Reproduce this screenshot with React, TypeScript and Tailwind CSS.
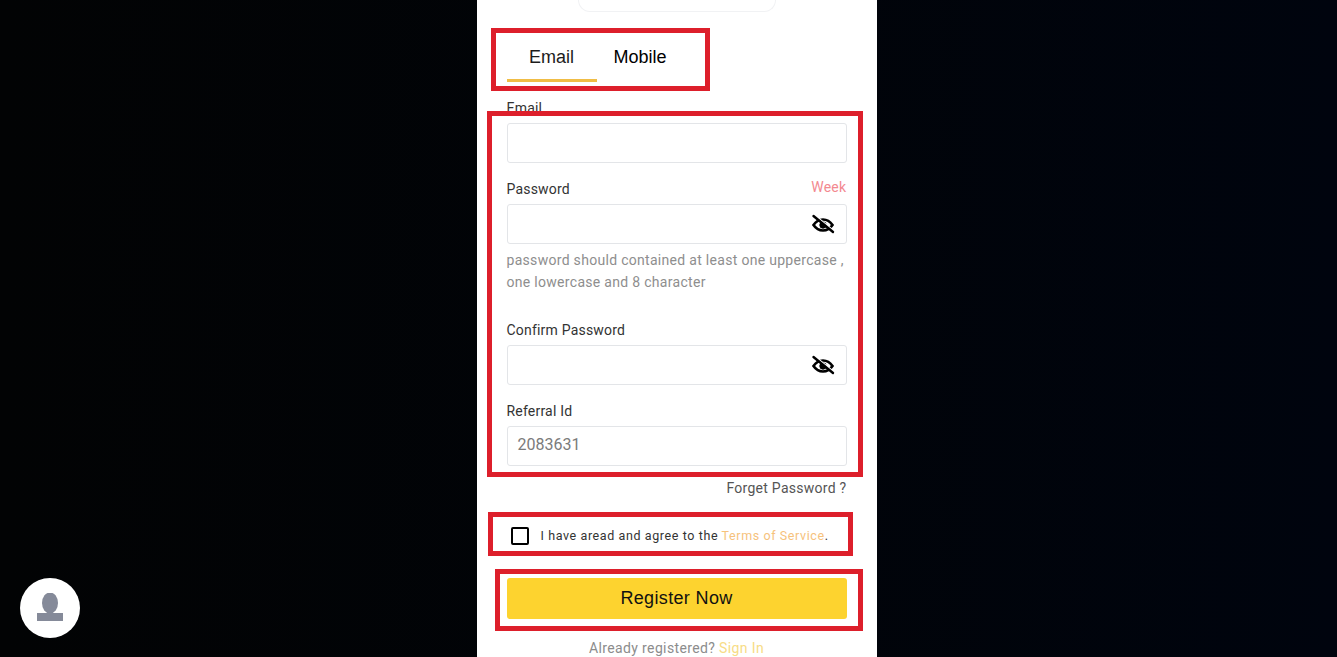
function EyeOff() {
  return (
    <svg viewBox="0 0 24 24" className="w-6 h-6 text-black" fill="none" stroke="currentColor">
      <path d="M2.500 13C5 9.300 8 7.500 12 7.500s7 1.800 9.500 5.500c-2.500 3.700-5.500 5.500-9.500 5.500s-7-1.800-9.500-5.500z" strokeWidth="2.600" />
      <circle cx="12" cy="13" r="3.200" fill="currentColor" strokeWidth="1" />
      <path d="M3 2.500l19 15.500" stroke="white" strokeWidth="1.500" />
      <path d="M2.500 4l19.500 16" strokeWidth="2.400" strokeLinecap="round" />
    </svg>
  );
}

function Field({ label, right, value, eye }: { label: string; right?: string; value?: string; eye?: boolean }) {
  return (
    <div>
      <div className="flex justify-between items-start h-[22px] mb-[4px]">
        <label className="text-[14px] leading-[22px] tracking-[0.2px] text-[#333]">{label}</label>
        {right && <span className="text-[14px] leading-[18px] tracking-[0.3px] text-[#f3898f]">{right}</span>}
      </div>
      <div className="h-10 border border-[#e3e5e8] rounded-[3px] flex items-center justify-between pl-[10px] pr-[11px] bg-white">
        <span className="text-[16px] mb-[2px] tracking-[0px] text-[#7b7b7b]">{value}</span>
        {eye && <EyeOff />}
      </div>
    </div>
  );
}

function App() {
  return (
    <div className="relative h-[657px] overflow-hidden bg-linear-to-r from-[#020304] to-[#00040e] flex justify-center font-['Roboto',sans-serif]">
      <div className="w-[400px] ml-[16px] bg-white px-[30px] relative">
        <div className="h-3 mx-[71px] border border-t-0 border-[#f1f2f4] rounded-b-[14px]"></div>

        <div className="flex mt-[32px] h-[38px] font-['Liberation_Sans',sans-serif] text-[18px] text-[#1c1c1c]">
          <div className="w-[90px] h-[38px] text-center leading-[26px] border-b-[3px] border-[#f0bd45]">Email</div>
          <div className="ml-[17px] leading-[26px] text-black">Mobile</div>
        </div>

        <div className="mt-[15px]">
          <Field label="Email" />
        </div>
        <div className="mt-[15px]">
          <Field label="Password" right="Week" eye />
        </div>
        <p className="mt-[5px] text-[14px] leading-[22px] tracking-[0.3px] text-[#8e8e8e]">
          password should contained at least one uppercase , one lowercase and 8 character
        </p>
        <div className="mt-[26px]">
          <Field label="Confirm Password" eye />
        </div>
        <div className="mt-[15px]">
          <Field label="Referral Id" value="2083631" />
        </div>

        <div className="mt-[11px] text-right text-[14px] leading-[22px] tracking-[0.27px] text-[#555]">Forget Password ?</div>

        <div className="mt-[26px] flex items-center pl-[4px] h-[22px]">
          <div className="w-[18px] h-[18px] border-2 border-black rounded-[2px]"></div>
          <span className="ml-[12px] text-[12.5px] tracking-[0.6px] text-[#333]">
            I have aread and agree to the <span className="text-[#f6c27c]">Terms of Service</span>.
          </span>
        </div>

        <button className="mt-[31px] w-full h-[41px] pb-[1px] rounded-[3px] bg-[#fdd32f] font-['Liberation_Sans',sans-serif] text-[18px] tracking-[0.35px] text-[#111]">
          Register Now
        </button>

        <div className="mt-[18px] text-center text-[14px] leading-[22px] tracking-[0.37px] text-[#8c8c8c]">
          Already registered? <span className="text-[#f7dc86]">Sign In</span>
        </div>

        {/* red annotation boxes drawn over the screenshot */}
        <div className="absolute left-[14px] top-[28px] w-[219px] h-[63px] border-[5px] border-[#dd1f2b]"></div>
        <div className="absolute left-[10px] top-[111px] w-[376px] h-[366px] border-[5px] border-[#dd1f2b]"></div>
        <div className="absolute left-[11px] top-[512px] w-[365px] h-[44px] border-[5px] border-[#dd1f2b]"></div>
        <div className="absolute left-[18px] top-[569px] w-[368px] h-[62px] border-[5px] border-[#dd1f2b]"></div>
      </div>

      <div className="absolute left-5 top-[578px] w-[60px] h-[60px] rounded-full bg-white flex items-center justify-center">
        <svg viewBox="0 0 28 30" className="w-[28px] h-[30px]" fill="#858a99">
          <ellipse cx="14" cy="10" rx="8" ry="10.500" />
          <rect x="1" y="20" width="26" height="8" />
        </svg>
      </div>
    </div>
  );
}

export default App;
